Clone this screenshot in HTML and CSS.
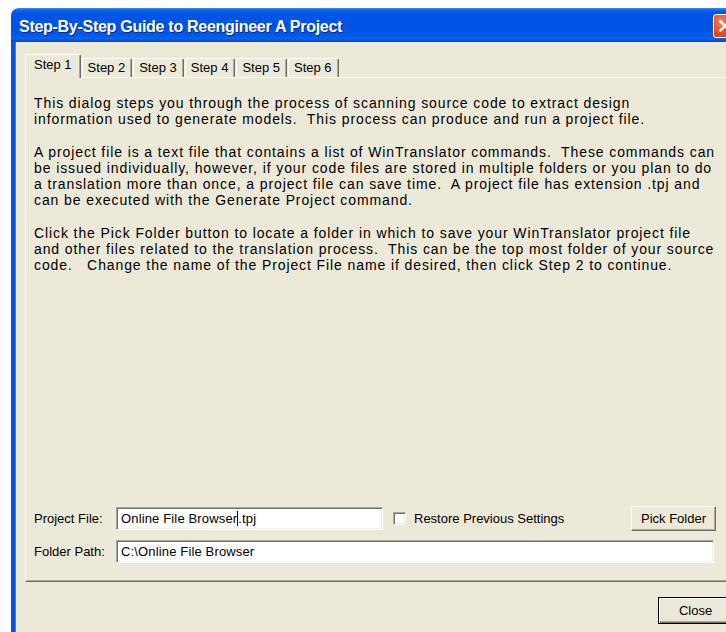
FILE: index.html
```html
<!DOCTYPE html>
<html lang="en">
<head>
<meta charset="utf-8">
<title>Step-By-Step Guide to Reengineer A Project</title>
<link rel="stylesheet" href="styles.css">
</head>
<body>
<div class="window">
  <div class="titlebar">
    <span class="title">Step-By-Step Guide to Reengineer A Project</span>
    <span class="close-x" aria-label="Close">
      <svg width="24" height="24" viewBox="0 0 24 24"><path d="M7 7 L17 17 M17 7 L7 17" stroke="#fff" stroke-width="2.6" stroke-linecap="square"/></svg>
    </span>
  </div>
  <div class="client">
    <div class="tabs">
      <div class="tab active">Step 1</div>
      <div class="tab">Step 2</div>
      <div class="tab">Step 3</div>
      <div class="tab">Step 4</div>
      <div class="tab">Step 5</div>
      <div class="tab">Step 6</div>
    </div>
    <div class="panel">
      <div class="intro">
        <p>This dialog steps you through the process of scanning source code to extract design<br>information used to generate models.&nbsp; This process can produce and run a project file.</p>
        <p>A project file is a text file that contains a list of WinTranslator commands.&nbsp; These commands can<br>be issued individually, however, if your code files are stored in multiple folders or you plan to do<br>a translation more than once, a project file can save time.&nbsp; A project file has extension .tpj and<br>can be executed with the Generate Project command.</p>
        <p>Click the Pick Folder button to locate a folder in which to save your WinTranslator project file<br>and other files related to the translation process.&nbsp; This can be the top most folder of your source<br>code.&nbsp;&nbsp; Change the name of the Project File name if desired, then click Step 2 to continue.</p>
      </div>
      <div class="form">
        <div class="row row-file">
          <label class="label">Project File:</label>
          <div class="field field-file">Online File Browser<span class="caret"></span>.tpj</div>
          <div class="check">
            <span class="box"></span>
            <span>Restore Previous Settings</span>
          </div>
          <button class="btn btn-pick">Pick Folder</button>
        </div>
        <div class="row row-path">
          <label class="label">Folder Path:</label>
          <div class="field field-path">C:\Online File Browser</div>
        </div>
      </div>
    </div>
    <div class="footer">
      <button class="btn btn-close">Close</button>
    </div>
  </div>
</div>
</body>
</html>
```
FILE: styles.css
```css
html, body {
  margin: 0;
  padding: 0;
}

body {
  width: 726px;
  height: 632px;
  overflow: hidden;
  background: #ffffff;
  font-family: "Liberation Sans", Arial, sans-serif;
  font-size: 13px;
  color: #000;
}

.window {
  margin: 8px 0 0 11px;
  width: 735px;
  height: 640px;
  display: flex;
  flex-direction: column;
}

/* Luna style caption bar */
.titlebar {
  height: 34px;
  flex: none;
  display: flex;
  align-items: center;
  justify-content: space-between;
  padding: 0 9px 0 8px;
  border-top-left-radius: 8px;
  background: linear-gradient(#3a8cf6 0, #1466ea 2px, #0056e6 5px, #0053e1 55%, #0059ea 80%, #0a62ee 90%, #0346cf 100%);
}

.title {
  color: #fff;
  font-weight: bold;
  font-size: 16px;
  letter-spacing: -0.28px;
  padding-top: 4px;
  text-shadow: 1px 1px 0 #0a2a8a;
}

.close-x {
  width: 22px;
  height: 22px;
  margin-top: 2px;
  border: 1px solid #fff;
  border-radius: 3px;
  background: radial-gradient(circle at 35% 30%, #f08a6a 0, #e2542c 45%, #c8401c 100%);
  display: flex;
  align-items: center;
  justify-content: center;
}

.close-x svg {
  width: 22px;
  height: 22px;
}

.client {
  flex: 1;
  background: #ece9d8;
  border-left: 4px solid #0b52dc;
  box-shadow: inset 1px 0 0 #3a7ef0;
  padding: 11px 0 0 10px;
}

.tabs {
  display: flex;
  align-items: flex-end;
  height: 24px;
  position: relative;
  z-index: 1;
}

.tab {
  height: 18px;
  line-height: 18px;
  padding: 0 6px 0 5px;
  border-top: 1px solid #fff;
  border-left: 1px solid #fff;
  border-right: 1px solid #716f64;
  box-shadow: inset -1px 0 0 #aca899;
  border-top-left-radius: 2px;
  border-top-right-radius: 2px;
  margin-left: 1px;
  white-space: nowrap;
}

.tab.active {
  height: 23px;
  line-height: 20px;
  padding: 0 8px 0 8px;
  margin-left: 0;
  margin-bottom: -1px;
  background: #ece9d8;
}

.panel {
  width: 680px;
  height: 486px;
  padding: 17px 13px 0 8px;
  border-top: 1px solid #fff;
  border-left: 1px solid #fff;
  border-bottom: 1px solid #716f64;
  box-shadow: inset 0 -1px 0 #aca899;
  display: flex;
  flex-direction: column;
  box-sizing: content-box;
}

.intro p {
  margin: 0 0 17px 0;
  font-size: 14px;
  letter-spacing: 0.9px;
  line-height: 16px;
  white-space: nowrap;
}

.form {
  margin-top: auto;
  padding-bottom: 18px;
  display: flex;
  flex-direction: column;
  gap: 9px;
}

.row {
  display: flex;
  align-items: center;
}

.label {
  width: 82px;
  flex: none;
  font-size: 13px;
}

.field {
  height: 23px;
  box-sizing: border-box;
  background: #fff;
  border-top: 1px solid #aca899;
  border-left: 1px solid #aca899;
  border-right: 1px solid #fff;
  border-bottom: 1px solid #fff;
  box-shadow: inset 1px 1px 0 #716f64, inset -1px -1px 0 #f1efe2;
  padding: 0 4px;
  line-height: 21px;
  font-size: 13px;
  letter-spacing: 0.15px;
  white-space: nowrap;
}

.field-file {
  width: 267px;
}

.field-path {
  flex: 1;
}

.caret {
  display: inline-block;
  width: 0;
  height: 15px;
  border-left: 1px solid #000;
  vertical-align: -3px;
}

.check {
  display: flex;
  align-items: center;
  gap: 8px;
  margin-left: 10px;
  font-size: 13px;
}

.box {
  width: 13px;
  height: 13px;
  box-sizing: border-box;
  background: #fff;
  border-top: 1px solid #aca899;
  border-left: 1px solid #aca899;
  border-right: 1px solid #fff;
  border-bottom: 1px solid #fff;
  box-shadow: inset 1px 1px 0 #716f64, inset -1px -1px 0 #f1efe2;
}

.btn {
  font-family: "Liberation Sans", Arial, sans-serif;
  font-size: 13px;
  color: #000;
  background: #ece9d8;
  border-top: 1px solid #fff;
  border-left: 1px solid #fff;
  border-right: 1px solid #716f64;
  border-bottom: 1px solid #716f64;
  box-shadow: inset -1px -1px 0 #aca899;
  padding: 0;
  margin: 0;
}

.btn-pick {
  margin-left: auto;
  margin-right: -2px;
  width: 85px;
  height: 25px;
}

.footer {
  display: flex;
  justify-content: flex-end;
  padding: 15px 13px 0 0;
}

.btn-close {
  width: 75px;
  height: 27px;
  border: 1px solid #000;
  box-shadow: inset 1px 1px 0 #fff, inset -1px -1px 0 #716f64, inset -2px -2px 0 #aca899;
}
```
